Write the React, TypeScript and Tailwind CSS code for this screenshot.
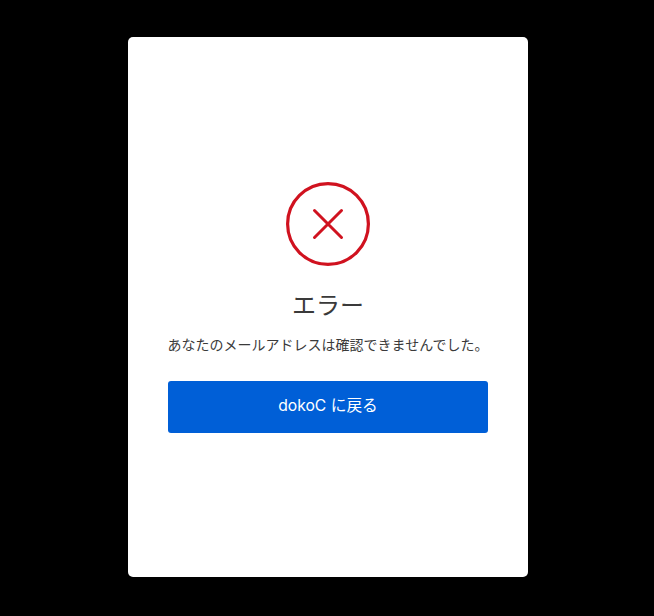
export default function App() {
  return (
    <div className="w-full h-[616px] bg-black flex items-center justify-center pl-[2px] pb-[2px] font-['Inter','Noto_Sans_CJK_JP',sans-serif]">
      <div className="w-[400px] h-[540px] bg-white rounded-[5px] flex flex-col items-center justify-center px-10">
        <svg width="84" height="84" viewBox="0 0 84 84" fill="none" className="block">
          <circle cx="42" cy="42" r="40.4" stroke="#d0121f" strokeWidth="3.2" />
          <path d="M28.5 28.5 L55.5 55.5 M55.5 28.5 L28.5 55.5" stroke="#d0121f" strokeWidth="3" strokeLinecap="round" />
        </svg>
        <h1 className="mt-[24px] text-[24px] leading-[32px] text-[#3a3a3a] font-normal whitespace-nowrap">エラー</h1>
        <p className="mt-[11px] pt-[1px] text-[14px] leading-[21px] text-[#3a3a3a] whitespace-nowrap">あなたのメールアドレスは確認できませんでした。</p>
        <button className="mt-[26px] pb-[2px] w-[320px] h-[52px] bg-[#005fd7] text-white rounded-[3px] text-[15.7px] whitespace-nowrap">dokoC に戻る</button>
      </div>
    </div>
  );
}
